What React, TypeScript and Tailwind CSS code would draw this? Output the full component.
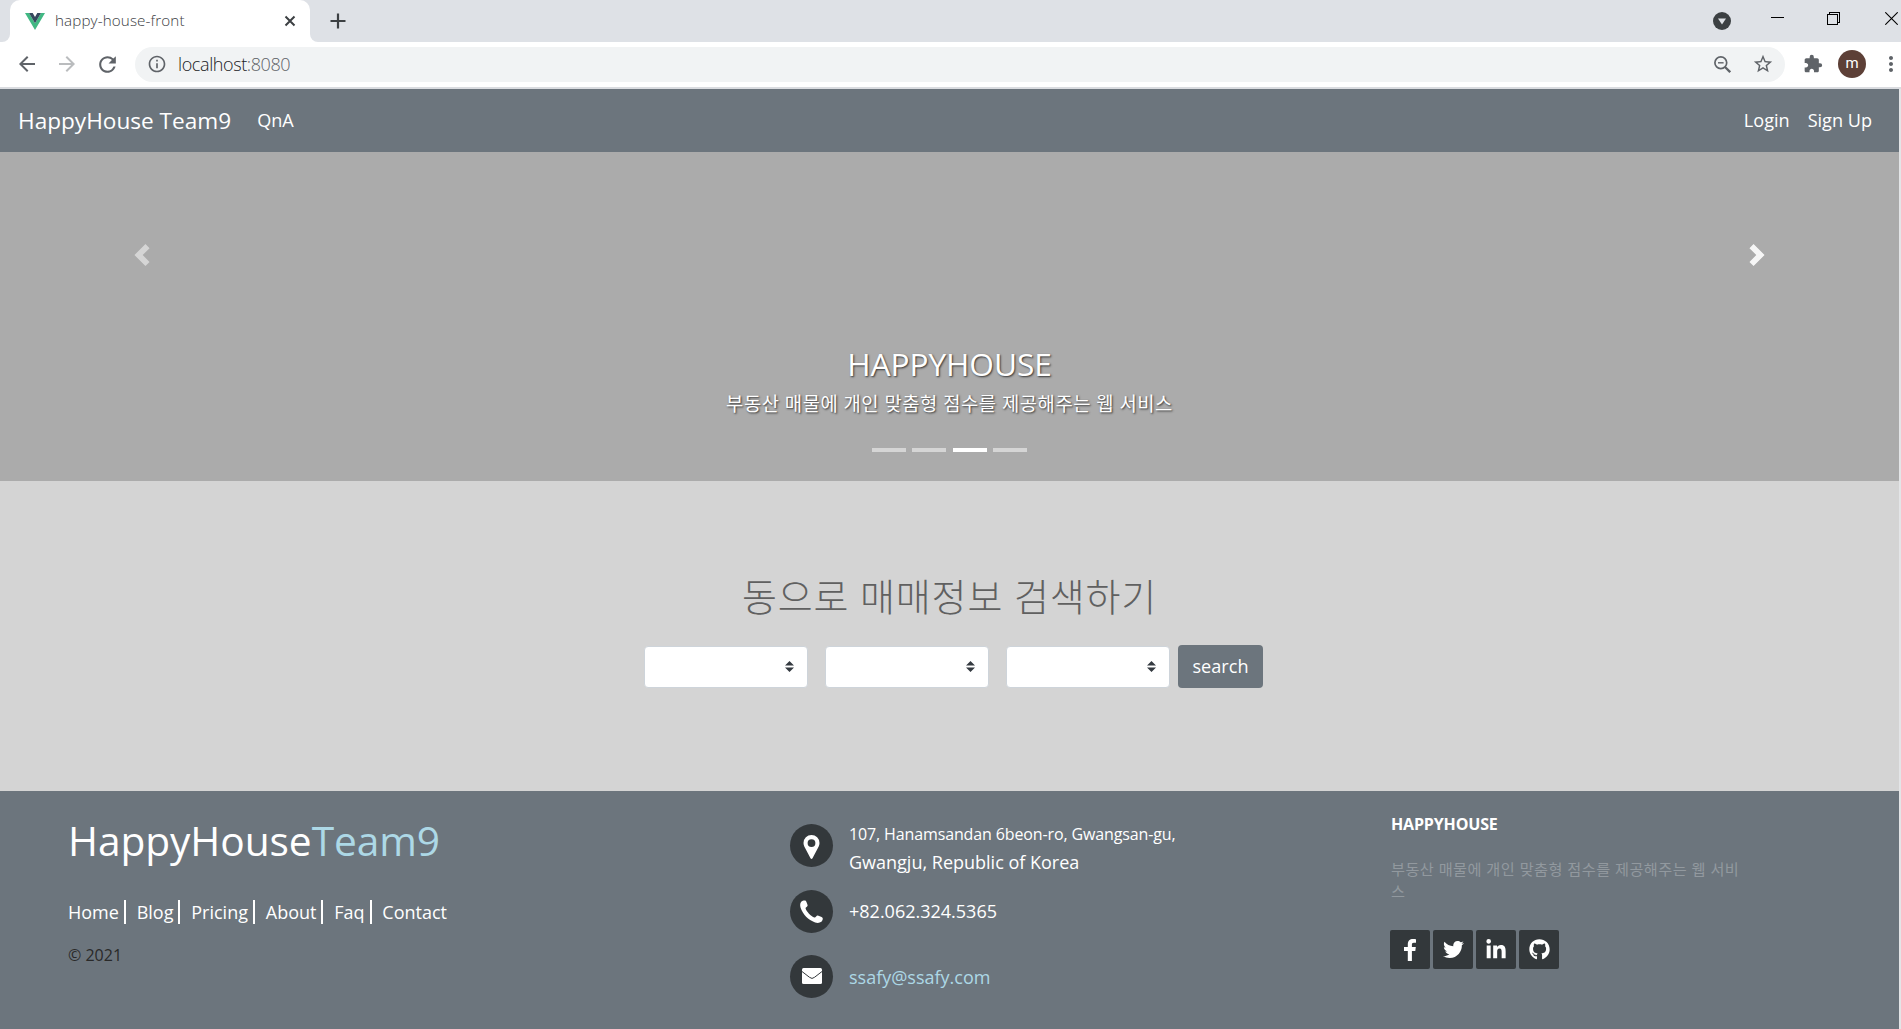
import React from "react";
import {
  FaFacebookF,
  FaTwitter,
  FaLinkedinIn,
  FaGithub,
} from "react-icons/fa";
import {
  MdArrowBack,
  MdArrowForward,
  MdRefresh,
  MdInfoOutline,
  MdStarBorder,
  MdExtension,
  MdMoreVert,
} from "react-icons/md";

function TabStrip() {
  return (
    <div className="flex h-[42px] items-stretch bg-[#dee1e6]">
      <div className="flex w-[10px] bg-white">
        <div className="flex-1 rounded-br-lg bg-[#dee1e6]" />
      </div>
      <div className="flex w-[300px] items-center rounded-t-[10px] bg-white pl-[15px] pr-[14px]">
        <svg viewBox="0 0 20 17" className="h-[17px] w-5 shrink-0">
          <path d="M0 0h4l6 10.200L16 0h4L10 17z" fill="#41b883" />
          <path d="M4 0h3.700L10 4l2.300-4H16l-6 10.200z" fill="#35495e" />
        </svg>
        <span className="ml-[10px] flex-1 pb-[2px] text-[15.200px] leading-5 tracking-[0.008em] text-[#3c4043]">
          happy-house-front
        </span>
        <svg viewBox="0 0 12 12" className="h-3 w-3">
          <path d="M1.500 1.500l9 9m0-9l-9 9" stroke="#3c4043" strokeWidth="2" />
        </svg>
      </div>
      <div className="flex w-[10px] bg-white">
        <div className="flex-1 rounded-bl-lg bg-[#dee1e6]" />
      </div>
      <svg viewBox="0 0 16 16" className="ml-[10px] mt-[13px] h-4 w-4">
        <path d="M8 .5v15M.5 8h15" stroke="#3c4043" strokeWidth="2.200" />
      </svg>
      <div className="flex-1" />
      <svg viewBox="0 0 18 18" className="mr-[40px] mt-[12px] h-[18px] w-[18px]">
        <circle cx="9" cy="9" r="9" fill="#3c4043" />
        <path d="M5 6.500h8l-4 6z" fill="#dee1e6" />
      </svg>
      <div className="mr-[43px] mt-[17px] h-px w-[13px] bg-black" />
      <svg
        viewBox="0 0 13 13"
        className="mr-[45px] mt-[12px] h-[13px] w-[13px]"
        fill="none"
        stroke="#000"
        shapeRendering="crispEdges"
      >
        <path d="M.5 2.500h10v10h-10zM2.500 2V.5h10v10H11" />
      </svg>
      <svg viewBox="0 0 13 13" className="mr-[3px] mt-[12px] h-[13px] w-[13px]">
        <path d="M.3.3l12.400 12.400m0-12.400L.3 12.700" stroke="#000" strokeWidth="1.100" />
      </svg>
    </div>
  );
}

function Toolbar() {
  return (
    <div className="flex h-[47px] items-center border-b-2 border-[#dadce0] bg-white pb-px text-[#5f6368]">
      <MdArrowBack className="ml-[15px] h-6 w-6 shrink-0" />
      <MdArrowForward className="ml-[16px] h-6 w-6 shrink-0 text-[#babcbe]" />
      <MdRefresh className="ml-[16px] h-[25px] w-[25px] shrink-0" />
      <div className="ml-[15px] flex h-[35px] w-[1650px] shrink-0 items-center rounded-full bg-[#f1f3f4]">
        <MdInfoOutline className="ml-[12px] h-5 w-5" />
        <span className="ml-[11px] flex-1 text-[18px] leading-6 tracking-[-0.022em] text-[#5f6368]">
          <span className="text-[#202124]">localhost</span>:8080
        </span>
        <svg
          viewBox="0 0 17 17"
          className="mr-[21px] h-[17px] w-[17px]"
          fill="none"
          stroke="currentColor"
        >
          <circle cx="6.800" cy="6.800" r="5.900" strokeWidth="1.700" />
          <path d="M11 11l5.200 5.200" strokeWidth="2.300" />
          <path d="M4 6.800h5.600" strokeWidth="1.400" />
        </svg>
        <MdStarBorder className="mr-[11px] h-[22px] w-[22px]" />
      </div>
      <MdExtension className="ml-[18px] h-5 w-5 shrink-0" />
      <div className="ml-[15px] flex h-7 w-7 shrink-0 items-center justify-center rounded-full bg-[#5d4037] pb-px font-[Roboto] text-[15px] font-normal text-white">
        m
      </div>
      <MdMoreVert className="ml-[13px] h-6 w-6 shrink-0" />
    </div>
  );
}

function NavBar() {
  return (
    <nav className="flex h-[63px] items-center bg-[#6c757d] text-[18.100px] text-white">
      <a className="ml-[18px] pt-px text-[22.600px]">HappyHouse Team9</a>
      <a className="ml-[26px]">QnA</a>
      <a className="ml-auto">Login</a>
      <a className="ml-[18px] mr-[27px]">Sign Up</a>
    </nav>
  );
}

function Carousel() {
  return (
    <section className="flex h-[329px] flex-col bg-[#ababab] text-white">
      <div className="flex justify-between px-[131px] pt-[92px]">
        <svg viewBox="0 0 8 8" className="h-[22px] w-[22px] opacity-50" fill="#fff">
          <path d="M5.250 0l-4 4 4 4 1.500-1.500L4.250 4l2.500-2.500L5.250 0z" />
        </svg>
        <svg viewBox="0 0 8 8" className="h-[22px] w-[22px] opacity-90" fill="#fff">
          <path d="M2.750 0l-1.500 1.500L3.750 4l-2.500 2.500L2.750 8l4-4-4-4z" />
        </svg>
      </div>
      <div className="mt-[79px] text-center [text-shadow:1px_1px_2px_#333]">
        <h3 className="text-[31.700px] leading-[38px] tracking-[-0.003em]">HAPPYHOUSE</h3>
        <p className="mt-[8px] text-[18.800px] leading-[27px] tracking-[0.027em]">
          부동산 매물에 개인 맞춤형 점수를 제공해주는 웹 서비스
        </p>
      </div>
      <div className="mt-[30px] flex justify-center gap-[6.500px]">
        <div className="h-1 w-[34px] bg-white/50" />
        <div className="h-1 w-[34px] bg-white/50" />
        <div className="h-1 w-[34px] bg-white" />
        <div className="h-1 w-[34px] bg-white/50" />
      </div>
    </section>
  );
}

function Select() {
  return (
    <div className="flex h-[42px] w-[164px] items-center justify-end rounded-[4px] border border-[#ced4da] bg-white pr-[13px]">
      <svg viewBox="0 0 4 5" className="h-[11px] w-[9px]" preserveAspectRatio="none">
        <path fill="#343a40" d="M2 0L0 2h4zm0 5L0 3h4z" />
      </svg>
    </div>
  );
}

function Search() {
  return (
    <section className="h-[310px] bg-[#d4d4d4]">
      <h1 className="pt-[88px] text-center text-[38px] font-light leading-[54px] tracking-[0.022em] text-[#606060]">
        동으로 매매정보 검색하기
      </h1>
      <div className="ml-[644px] mt-[22px] flex items-center">
        <Select />
        <div className="ml-[17px]">
          <Select />
        </div>
        <div className="ml-[17px]">
          <Select />
        </div>
        <button className="ml-[8px] h-[43px] w-[85px] rounded-[4px] bg-[#6c757d] text-[18.100px] text-white">
          search
        </button>
      </div>
    </section>
  );
}

function Disc({ children }: { children: React.ReactNode }) {
  return (
    <div className="flex h-[43px] w-[43px] shrink-0 items-center justify-center rounded-full bg-[#33383b] text-white">
      {children}
    </div>
  );
}

function Social({ children }: { children: React.ReactNode }) {
  return (
    <a className="flex h-[39px] w-10 items-center justify-center rounded-[2px] bg-[#33383b] text-white">
      {children}
    </a>
  );
}

const links = ["Home", "Blog", "Pricing", "About", "Faq", "Contact"];

function Footer() {
  return (
    <footer className="flex h-[238px] bg-[#6c757d] text-[18px] text-white">
      <div className="w-[790px] pl-[68px]">
        <h3 className="mt-[20px] text-[40.700px] leading-[58px] tracking-[-0.002em]">
          HappyHouse<span className="text-[#add8e6]">Team9</span>
        </h3>
        <p className="mt-[31px] flex items-center leading-6">
          {links.map((l, i) => (
            <a
              key={l}
              className={
                i === 0 ? "" : "ml-[5px] border-l-2 border-white pl-[10.800px]"
              }
            >
              {l}
            </a>
          ))}
        </p>
        <p className="mt-[19px] text-[16px] leading-6 text-[#292929]">© 2021</p>
      </div>
      <div className="w-[601px]">
        <div className="mt-[28px] flex items-center">
          <div className="-mt-[4px]">
            <Disc>
              <svg viewBox="0 0 16 24" className="mt-[3px] h-6 w-[17px]" fill="#fff" fillRule="evenodd">
                <path d="M8 0a8 8 0 0 0-8 8c0 1.300.3 2.400.8 3.400L7 23.200q1 1.500 2 0l6.200-11.800c.5-1 .8-2.100.8-3.400a8 8 0 0 0-8-8zm0 4.200a3.900 3.900 0 1 1 0 7.800 3.900 3.900 0 0 1 0-7.800z" />
              </svg>
            </Disc>
          </div>
          <p className="ml-[16px] pt-px leading-[28px]">
            <span className="block text-[16px] tracking-[-0.008em]">107, Hanamsandan 6beon-ro, Gwangsan-gu,</span>
            Gwangju, Republic of Korea
          </p>
        </div>
        <div className="mt-[14px] flex items-center">
          <Disc>
            <svg viewBox="0 0 23 23" className="h-[23px] w-[23px]" fill="#fff">
              <path d="M1.200 1.800C2.500.6 4.600.1 5.700.7c.7.9 1.500 3 1.900 4.500.3 1.200-2.300 2-2 3.200.8 3 5.400 7.800 8.800 9.100 1.300.4 2.100-2.300 3.400-2 1.500.4 3.800 1.500 4.700 2.200.6 1.100.1 3-1.100 4.100-1.800 1.200-4 1.400-6.300.6C8.100 20 3 14.600.6 7.800-.1 5.500 0 3.400 1.200 1.800z" />
            </svg>
          </Disc>
          <p className="ml-[16px]">+82.062.324.5365</p>
        </div>
        <div className="mt-[22px] flex items-center">
          <Disc>
            <svg viewBox="0 0 20 16" className="-mt-px h-4 w-5">
              <rect width="20" height="16" rx="1.500" fill="#fff" />
              <path d="M0 3.500l7.500 5.800q2.500 2.300 5 0L20 3.500" fill="none" stroke="#33383b" strokeWidth="1" />
            </svg>
          </Disc>
          <p className="ml-[16px] pt-px text-[#add8e6]">ssafy@ssafy.com</p>
        </div>
      </div>
      <div className="w-[370px]">
        <h4 className="mt-[21px] text-[16px] font-bold leading-6 tracking-[-0.01em]">HAPPYHOUSE</h4>
        <p className="mt-[22px] text-[15.200px] leading-[22px] tracking-[0.03em] text-[#92999f]">
          부동산 매물에 개인 맞춤형 점수를 제공해주는 웹 서비
          <br />스
        </p>
        <div className="-ml-px mt-[28px] flex gap-[3px]">
          <Social>
            <svg viewBox="0 0 12 22" className="h-[22px] w-3" fill="#fff">
              <path d="M12 .2v3.600H9.900C8.200 3.800 7.900 4.600 7.900 5.700v2.400h3.900L11.300 12H7.900v10H3.800V12H0V8.100h3.800V5.200C3.800 1.800 5.900 0 8.900 0c1.400 0 2.700.1 3.100.2z" />
            </svg>
          </Social>
          <Social><FaTwitter className="h-[21px] w-[21px]" /></Social>
          <Social><FaLinkedinIn className="h-[22px] w-[22px]" /></Social>
          <Social><FaGithub className="h-[21px] w-[21px]" /></Social>
        </div>
      </div>
    </footer>
  );
}

export default function App() {
  return (
    <div className="h-[1029px] w-[1901px] overflow-hidden bg-white font-['Open_Sans','Noto_Sans_CJK_KR',sans-serif]">
      <div className="font-light">
        <TabStrip />
        <Toolbar />
      </div>
      <div className="border-r-2 border-[#e3e5e7]">
        <NavBar />
        <Carousel />
        <Search />
        <Footer />
      </div>
    </div>
  );
}
